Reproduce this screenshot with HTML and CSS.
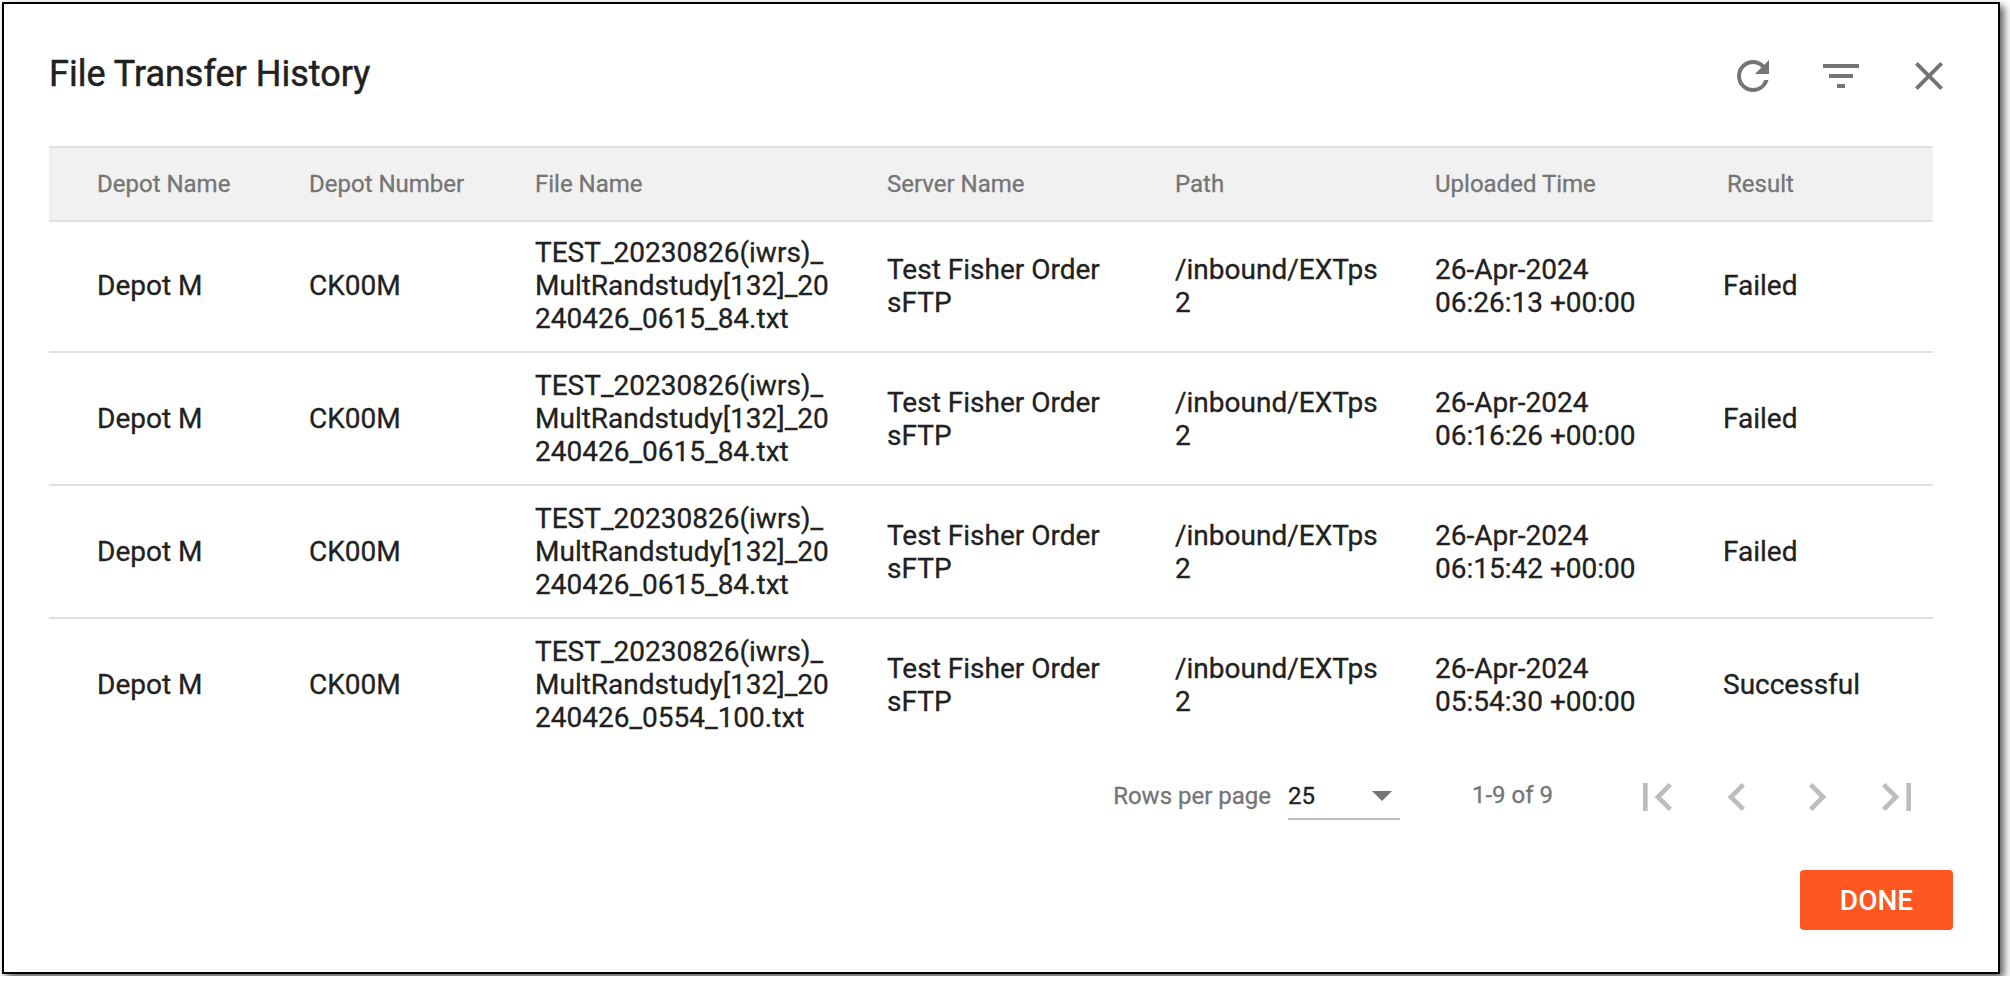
FILE: index.html
```html
<!DOCTYPE html>
<html lang="en">
<head>
<meta charset="utf-8">
<title>File Transfer History</title>
<link rel="stylesheet" href="styles.css">
</head>
<body>
<main class="dialog">
  <header class="dialog-header">
    <h1 class="title">File Transfer History</h1>
    <div class="actions">
      <svg class="icon" viewBox="0 0 24 24"><path d="M17.65 6.35A7.958 7.958 0 0 0 12 4c-4.42 0-7.99 3.58-7.99 8s3.57 8 7.99 8c3.73 0 6.84-2.55 7.73-6h-2.08A5.99 5.99 0 0 1 12 18c-3.31 0-6-2.69-6-6s2.69-6 6-6c1.66 0 3.14.69 4.22 1.78L13 11h7V4l-2.35 2.35z"/></svg>
      <svg class="icon" viewBox="0 0 24 24"><path d="M10 18h4v-2h-4v2zM3 6v2h18V6H3zm3 7h12v-2H6v2z"/></svg>
      <svg class="icon" viewBox="0 0 24 24"><path d="M19 6.41L17.59 5 12 10.59 6.41 5 5 6.41 10.59 12 5 17.59 6.41 19 12 13.41 17.59 19 19 17.59 13.41 12z"/></svg>
    </div>
  </header>
  <section class="table">
    <div class="row head">
      <span>Depot Name</span><span>Depot Number</span><span>File Name</span><span>Server Name</span><span>Path</span><span>Uploaded Time</span><span class="result">Result</span>
    </div>
    <div class="row first">
      <span>Depot M</span><span>CK00M</span><span>TEST_20230826(iwrs)_<br>MultRandstudy[132]_20<br>240426_0615_84.txt</span><span>Test Fisher Order<br>sFTP</span><span>/inbound/EXTps<br>2</span><span>26-Apr-2024<br>06:26:13 +00:00</span><span>Failed</span>
    </div>
    <div class="row">
      <span>Depot M</span><span>CK00M</span><span>TEST_20230826(iwrs)_<br>MultRandstudy[132]_20<br>240426_0615_84.txt</span><span>Test Fisher Order<br>sFTP</span><span>/inbound/EXTps<br>2</span><span>26-Apr-2024<br>06:16:26 +00:00</span><span>Failed</span>
    </div>
    <div class="row">
      <span>Depot M</span><span>CK00M</span><span>TEST_20230826(iwrs)_<br>MultRandstudy[132]_20<br>240426_0615_84.txt</span><span>Test Fisher Order<br>sFTP</span><span>/inbound/EXTps<br>2</span><span>26-Apr-2024<br>06:15:42 +00:00</span><span>Failed</span>
    </div>
    <div class="row">
      <span>Depot M</span><span>CK00M</span><span>TEST_20230826(iwrs)_<br>MultRandstudy[132]_20<br>240426_0554_100.txt</span><span>Test Fisher Order<br>sFTP</span><span>/inbound/EXTps<br>2</span><span>26-Apr-2024<br>05:54:30 +00:00</span><span>Successful</span>
    </div>
  </section>
  <nav class="pager">
    <span class="pager-label">Rows per page</span>
    <div class="select"><span>25</span><svg class="arrow" viewBox="0 0 20 10"><path d="M0 0h20L10 10z"/></svg></div>
    <span class="range">1-9 of 9</span>
    <div class="pages">
      <svg viewBox="0 0 24 24"><path d="M18.41 16.59L13.82 12l4.59-4.59L17 6l-6 6 6 6zM6 6h2v12H6z"/></svg>
      <svg viewBox="0 0 24 24"><path d="M15.41 7.41L14 6l-6 6 6 6 1.41-1.41L10.83 12z"/></svg>
      <svg viewBox="0 0 24 24"><path d="M10 6L8.59 7.41 13.17 12l-4.58 4.59L10 18l6-6z"/></svg>
      <svg viewBox="0 0 24 24"><path d="M5.59 7.41L10.18 12l-4.59 4.59L7 18l6-6-6-6zM16 6h2v12h-2z"/></svg>
    </div>
  </nav>
  <footer class="footer"><button class="done">DONE</button></footer>
</main>
</body>
</html>
```
FILE: styles.css
```css
* { box-sizing: border-box; }
body { margin: 0; padding: 2px; background: #fff; color: #212121; font-family: Roboto, sans-serif; overflow: hidden; -webkit-text-stroke: .3px currentColor; }
.dialog { width: 1998px; height: 972px; border: 2px solid #000; background: #fff; box-shadow: 4px 4px 8px rgba(0, 0, 0, .65); display: flex; flex-direction: column; }
.dialog-header { height: 142px; padding: 48px 45px 0; display: flex; justify-content: space-between; align-items: flex-start; }
.title { margin: 0; font-size: 36px; line-height: 44px; font-weight: 400; -webkit-text-stroke-width: .5px; }
.actions { display: flex; gap: 40px; }
.icon { width: 48px; height: 48px; fill: #757575; display: block; }
.table { width: 1884px; margin-left: 45px; }
.row { display: grid; grid-template-columns: 212px 226px 352px 288px 260px 288px 1fr; align-items: center; height: 133px; padding-left: 48px; border-bottom: 2px solid #e0e0e0; font-size: 28px; line-height: 33px; }
.first { height: 131px; padding-bottom: 2px; }
.row:last-child { border-bottom-color: transparent; }
.head { height: 76px; background: #f1f1f1; border-top: 2px solid #e0e0e0; color: #757575; font-size: 24px; }
.result { padding-left: 4px; }
.pager { display: flex; align-items: center; height: 56px; margin-top: 17px; padding-right: 73px; justify-content: flex-end; color: #757575; font-size: 24px; line-height: 28px; }
.pager-label { margin: 0 17px 2px 0; }
.select { width: 112px; height: 46px; border-bottom: 2px solid #bdbdbd; display: flex; align-items: center; justify-content: space-between; padding-right: 8px; color: #212121; }
.arrow { width: 20px; height: 10px; fill: #757575; }
.range { margin: 0 0 4px 72px; width: 157px; }
.pages { display: flex; gap: 24px; }
.pages svg { width: 56px; height: 56px; fill: #bdbdbd; display: block; }
.footer { display: flex; justify-content: flex-end; padding: 45px 45px 0 0; }
.done { width: 153px; height: 60px; border: 0; border-radius: 4px; padding: 0; background: #ff5722; color: #fff; font-family: Roboto, sans-serif; font-size: 28px; font-weight: 500; -webkit-text-stroke-width: 0; }
```
